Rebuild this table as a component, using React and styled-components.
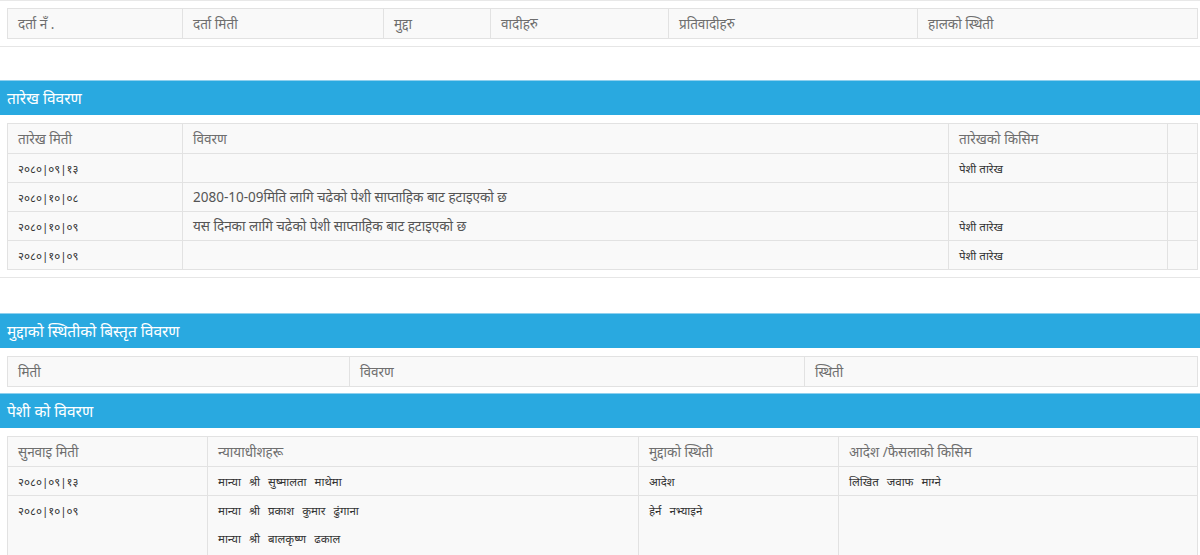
import React from "react";
import styled, { createGlobalStyle } from "styled-components";

const Global = createGlobalStyle`
  html, body { margin: 0; padding: 0; background: #fff; }
  body { font-family: "Noto Sans", "Liberation Sans", sans-serif; color: #333; }
`;

const Page = styled.div`
  width: 1200px;
  overflow: hidden;
  border-top: 1px solid #e8e8e8;
`;

const Body = styled.div`
  padding: ${(p) => p.$pt || 7}px 3px ${(p) => p.$pb || 7}px 7px;
  border-bottom: ${(p) => (p.$line ? "1px solid #e6e6e6" : "none")};
  margin-bottom: ${(p) => p.$mb || 0}px;
`;

const Heading = styled.div`
  height: 34px;
  background: #29a9e0;
  border-top: 1px solid #8fd0ee;
  color: #fff;
  font-size: 15.5px;
  display: flex;
  align-items: center;
  padding-left: 7px;
`;

const Table = styled.table`
  width: 1190px;
  border-collapse: collapse;
  table-layout: fixed;
  background: #f9f9f9;
  border: 1px solid #dedede;
`;

const Th = styled.th`
  text-align: left;
  font-weight: normal;
  font-size: 13.5px;
  color: #6e6e6e;
  height: 29px;
  padding: 0 10px;
  border: 1px solid #e2e2e2;
  vertical-align: middle;
`;

const Td = styled.td`
  font-size: ${(p) => (p.$big ? "13.5px" : "11.5px")};
  color: ${(p) => (p.$big ? "#555" : "#333")};
  word-spacing: ${(p) => (p.$wide ? "5px" : "normal")};
  height: ${(p) => (p.$tall ? "60px" : "28px")};
  padding: ${(p) => (p.$top ? "7px 10px 0" : "0 10px")};
  border: 1px solid #e2e2e2;
  vertical-align: ${(p) => (p.$top ? "top" : "middle")};
`;

const Line = styled.div`
  height: 28px;
  display: flex;
  align-items: center;
  margin-top: ${(p) => (p.$first ? "-7px" : "0")};
`;

const Cols = ({ widths }) => (
  <colgroup>
    {widths.map((w, i) => (
      <col key={i} style={{ width: w }} />
    ))}
  </colgroup>
);

export default function App() {
  return (
    <>
      <Global />
      <Page>
        <Body $line $mb={33}>
          <Table>
            <Cols widths={[175, 201, 107, 178, 249, 280]} />
            <thead>
              <tr>
                <Th>दर्ता नँ .</Th>
                <Th>दर्ता मिती</Th>
                <Th>मुद्दा</Th>
                <Th>वादीहरु</Th>
                <Th>प्रतिवादीहरु</Th>
                <Th>हालको स्थिती</Th>
              </tr>
            </thead>
          </Table>
        </Body>

        <Heading>तारेख विवरण</Heading>
        <Body $pt={8} $line $mb={35}>
          <Table>
            <Cols widths={[175, 766, 219, 30]} />
            <thead>
              <tr>
                <Th>तारेख मिती</Th>
                <Th>विवरण</Th>
                <Th>तारेखको किसिम</Th>
                <Th />
              </tr>
            </thead>
            <tbody>
              <tr>
                <Td>२०८०|०९|१३</Td>
                <Td />
                <Td>पेशी तारेख</Td>
                <Td />
              </tr>
              <tr>
                <Td>२०८०|१०|०८</Td>
                <Td $big>2080-10-09मिति लागि चढेको पेशी साप्ताहिक बाट हटाइएको छ</Td>
                <Td />
                <Td />
              </tr>
              <tr>
                <Td>२०८०|१०|०९</Td>
                <Td $big>यस दिनका लागि चढेको पेशी साप्ताहिक बाट हटाइएको छ</Td>
                <Td>पेशी तारेख</Td>
                <Td />
              </tr>
              <tr>
                <Td>२०८०|१०|०९</Td>
                <Td />
                <Td>पेशी तारेख</Td>
                <Td />
              </tr>
            </tbody>
          </Table>
        </Body>

        <Heading>मुद्दाको स्थितीको बिस्तृत विवरण</Heading>
        <Body $pt={8} $pb={6}>
          <Table>
            <Cols widths={[342, 455, 393]} />
            <thead>
              <tr>
                <Th>मिती</Th>
                <Th>विवरण</Th>
                <Th>स्थिती</Th>
              </tr>
            </thead>
          </Table>
        </Body>

        <Heading>पेशी को विवरण</Heading>
        <Body $pt={8}>
          <Table>
            <Cols widths={[200, 431, 200, 359]} />
            <thead>
              <tr>
                <Th>सुनवाइ मिती</Th>
                <Th>न्यायाधीशहरू</Th>
                <Th>मुद्दाको स्थिती</Th>
                <Th>आदेश /फैसलाको किसिम</Th>
              </tr>
            </thead>
            <tbody>
              <tr>
                <Td>२०८०|०९|१३</Td>
                <Td $wide>मान्‍या श्री सुष्मालता माथेमा</Td>
                <Td $wide>आदेश</Td>
                <Td $wide>लिखित जवाफ माग्ने</Td>
              </tr>
              <tr>
                <Td $top $tall>२०८०|१०|०९</Td>
                <Td $top $tall $wide>
                  <Line $first>मान्‍या श्री प्रकाश कुमार ढुंगाना</Line>
                  <Line>मान्‍या श्री बालकृष्ण ढकाल</Line>
                </Td>
                <Td $top $tall $wide>हेर्न नभ्याइने</Td>
                <Td $top $tall />
              </tr>
            </tbody>
          </Table>
        </Body>
      </Page>
    </>
  );
}
